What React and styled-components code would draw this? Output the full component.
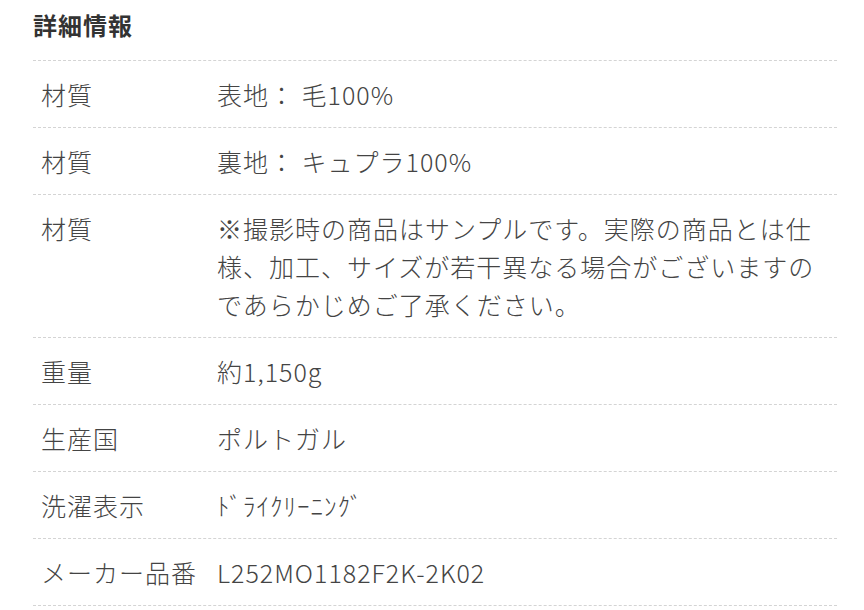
import React from "react";
import styled, { createGlobalStyle } from "styled-components";

const GlobalStyle = createGlobalStyle`
  body {
    margin: 0;
    background: #fff;
    font-family: "Noto Sans CJK JP", "Noto Sans", sans-serif;
    color: #333;
  }
`;

const Section = styled.section`
  width: 804px;
  padding-left: 33px;
`;

const Heading = styled.h2`
  margin: 0;
  padding: 8px 0 18px;
  font-size: 24px;
  line-height: 34px;
  letter-spacing: 1px;
  font-weight: 700;
  color: #333;
  border-bottom: 1px dashed #d4d4d4;
`;

const Row = styled.div`
  display: flex;
  padding: 14px 8px;
  font-size: 25px;
  line-height: 38px;
  letter-spacing: 1px;
  font-weight: 300;
  border-bottom: 1px dashed #d4d4d4;
`;

const Label = styled.div`
  flex: 0 0 176px;
  color: #444;
  white-space: nowrap;
`;

const Value = styled.div`
  flex: 1;
  color: #444;
`;

const specs = [
  ["材質", "表地： 毛100%"],
  ["材質", "裏地： キュプラ100%"],
  ["材質", "※撮影時の商品はサンプルです。実際の商品とは仕様、加工、サイズが若干異なる場合がございますのであらかじめご了承ください。"],
  ["重量", "約1,150g"],
  ["生産国", "ポルトガル"],
  ["洗濯表示", "ﾄﾞﾗｲｸﾘｰﾆﾝｸﾞ"],
  ["メーカー品番", "L252MO1182F2K-2K02"],
];

const App = () => {
  return (
    <>
      <GlobalStyle />
      <Section>
        <Heading>詳細情報</Heading>
        {specs.map(([label, value], i) => (
          <Row key={i}>
            <Label>{label}</Label>
            <Value>{value}</Value>
          </Row>
        ))}
      </Section>
    </>
  );
};

export default App;
